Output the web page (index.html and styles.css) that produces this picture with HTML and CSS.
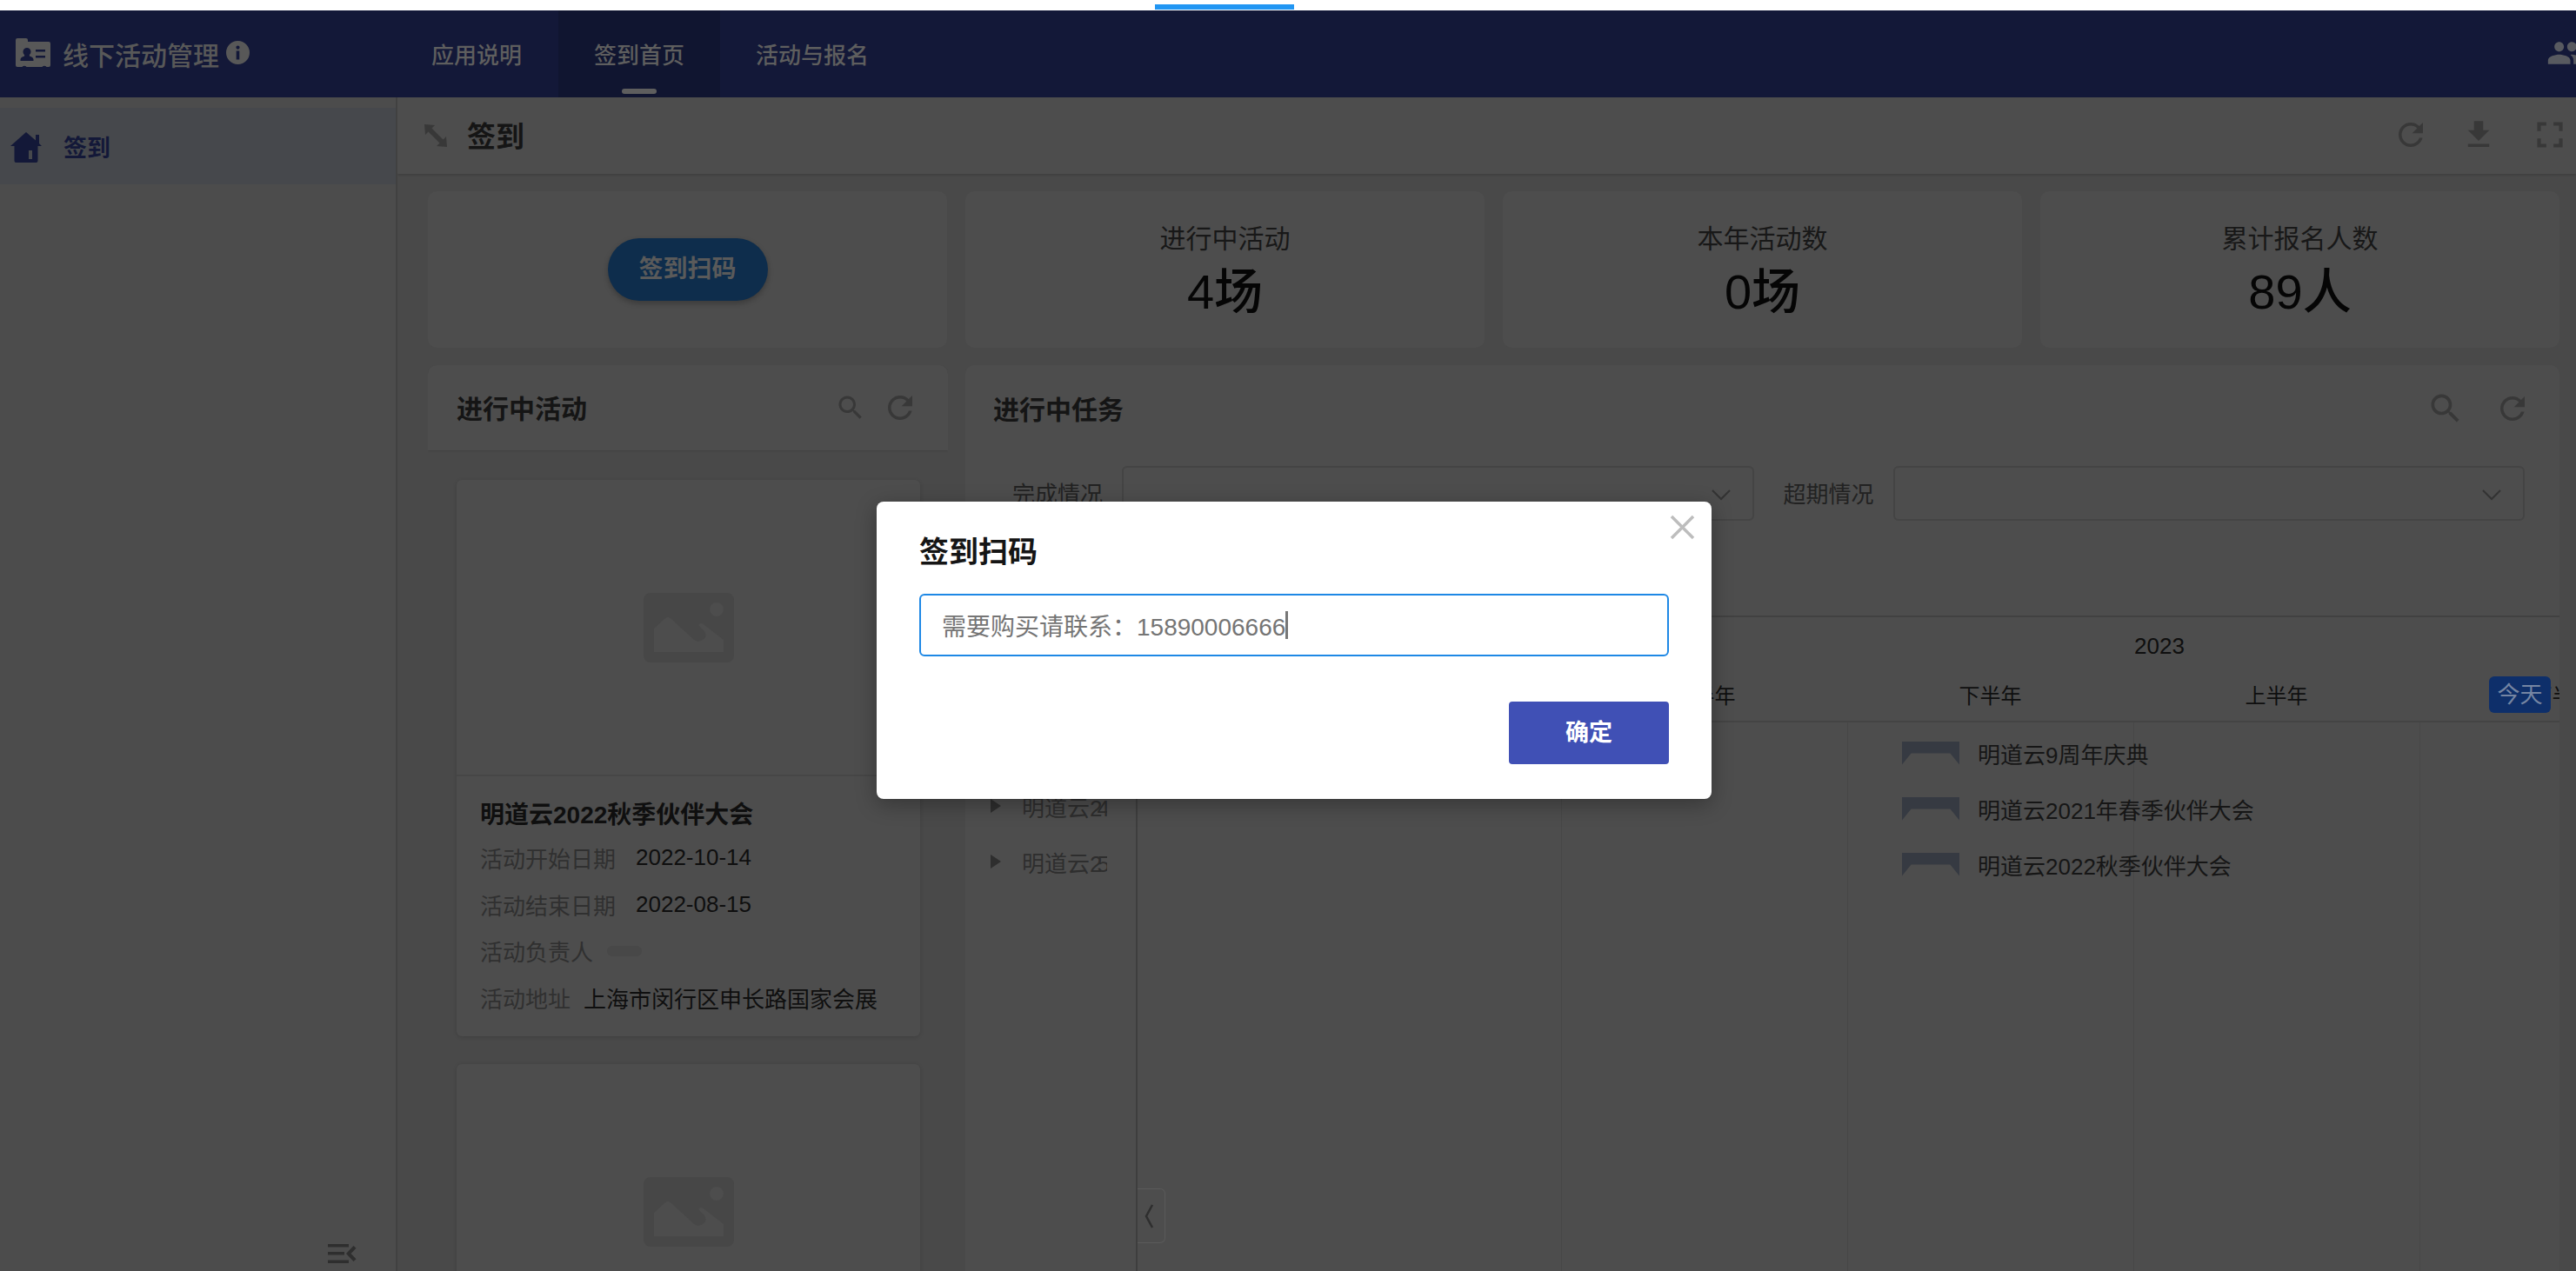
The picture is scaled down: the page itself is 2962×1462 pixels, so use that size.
FILE: index.html
```html
<!DOCTYPE html>
<html lang="zh-CN">
<head>
    <meta charset="UTF-8">
    <meta name="viewport" content="width=device-width, initial-scale=1.0">
    <title>线下活动管理</title>
    <link rel="stylesheet" href="styles.css">
</head>
<body>

    <!-- Loading strip -->
    <div class="top-strip">
        <div class="top-progress"></div>
    </div>

    <!-- Header -->
    <div class="app-header">
        <div class="app-brand">
            <svg class="brand-icon" viewBox="0 0 40 33">
                <path fill-rule="evenodd" d="M2 0h10a2 2 0 0 1 2 2v2h24a2 2 0 0 1 2 2v25a2 2 0 0 1-2 2h-2.500a3 3 0 0 0-5 0H12.500a3 3 0 0 0-5 0H2a2 2 0 0 1-2-2V2a2 2 0 0 1 2-2zM13 11a4.500 4.500 0 0 0-4.500 4.500c0 1.500.6 2.800 1.600 3.600v1.400c-2.600.8-4.600 2.200-4.600 4v1.500h15v-1.500c0-1.800-2-3.200-4.600-4v-1.400a4.700 4.700 0 0 0 1.600-3.600A4.500 4.500 0 0 0 13 11zM23 13v2.500h11V13zM23 20v2.500h11V20z"/>
            </svg>
            <span class="brand-name">线下活动管理</span>
            <svg class="brand-info" viewBox="0 0 27 27">
                <path fill-rule="evenodd" d="M13.500 0a13.500 13.500 0 1 1 0 27a13.500 13.500 0 0 1 0-27zM11.700 11.500v10h3.600v-10zM13.500 5.500a2.100 2.100 0 1 0 0 4.200a2.100 2.100 0 0 0 0-4.200z"/>
            </svg>
        </div>
        <div class="app-tabs">
            <div class="app-tab">应用说明</div>
            <div class="app-tab active">签到首页</div>
            <div class="app-tab">活动与报名</div>
        </div>
        <svg class="header-user" viewBox="0 0 24 24">
            <path d="M16 11c1.660 0 2.990-1.340 2.990-3S17.660 5 16 5c-1.660 0-3 1.340-3 3s1.340 3 3 3zm-8 0c1.660 0 2.990-1.340 2.990-3S9.660 5 8 5C6.340 5 5 6.340 5 8s1.340 3 3 3zm0 2c-2.330 0-7 1.170-7 3.500V19h14v-2.500c0-2.330-4.670-3.500-7-3.500zm8 0c-.290 0-.620.020-.970.050 1.160.840 1.970 1.970 1.970 3.450V19h6v-2.500c0-2.330-4.670-3.500-7-3.500z"/>
        </svg>
    </div>

    <div class="app-body">

        <!-- Sidebar -->
        <div class="sidebar">
            <div class="side-item">
                <svg class="side-icon" viewBox="0 0 36 35">
                    <path fill-rule="evenodd" d="M18 0l11 9.500V3h4v10l3 3h-4.500v17a2 2 0 0 1-2 2H6.500a2 2 0 0 1-2-2V16H0zM21 21v10h4V21z"/>
                </svg>
                <span>签到</span>
            </div>
            <svg class="side-collapse" viewBox="0 0 33 22">
                <path d="M0 0h24v3.500H0zM0 9h19v3.500H0zM0 18.500h24V22H0zM29.500 2l3 2.700-6 6.300 6 6.300-3 2.700-8.500-9z"/>
            </svg>
        </div>

        <div class="main">

            <!-- Page toolbar -->
            <div class="toolbar">
                <svg class="toolbar-expand" viewBox="0 0 26 26">
                    <path d="M0 0L12 1 8.500 4.500 21.500 17.500 25 14 26 26 14 25 17.500 21.500 4.500 8.500 1 12z"/>
                </svg>
                <div class="toolbar-title">签到</div>
                <div class="toolbar-icons">
                    <svg class="icon-42" viewBox="0 0 24 24"><path d="M17.650 6.350C16.200 4.900 14.210 4 12 4c-4.420 0-7.990 3.580-7.990 8s3.570 8 7.990 8c3.730 0 6.840-2.550 7.730-6h-2.080c-.820 2.330-3.040 4-5.650 4-3.310 0-6-2.690-6-6s2.690-6 6-6c1.660 0 3.140.690 4.220 1.780L13 11h7V4l-2.350 2.350z"/></svg>
                    <svg class="icon-42" viewBox="0 0 24 24"><path d="M19 9h-4V3H9v6H5l7 7 7-7zM5 18v2h14v-2H5z"/></svg>
                    <svg class="icon-50" viewBox="0 0 24 24"><path d="M7 14H5v5h5v-2H7v-3zm-2-4h2V7h3V5H5v5zm12 7h-3v2h5v-5h-2v3zM14 5v2h3v3h2V5h-5z"/></svg>
                </div>
            </div>

            <div class="content">

                <!-- Summary cards -->
                <div class="summary-row">
                    <div class="summary-card">
                        <div class="scan-button">签到扫码</div>
                    </div>
                    <div class="summary-card">
                        <div class="summary-label">进行中活动</div>
                        <div class="summary-value">4场</div>
                    </div>
                    <div class="summary-card">
                        <div class="summary-label">本年活动数</div>
                        <div class="summary-value">0场</div>
                    </div>
                    <div class="summary-card">
                        <div class="summary-label">累计报名人数</div>
                        <div class="summary-value">89人</div>
                    </div>
                </div>

                <div class="lower-row">

                    <!-- Activity list -->
                    <div class="activity-col">
                        <div class="panel-head small">
                            <div class="panel-title">进行中活动</div>
                            <svg class="icon-36" viewBox="0 0 24 24"><path d="M15.500 14h-.790l-.280-.270C15.410 12.590 16 11.110 16 9.500 16 5.910 13.090 3 9.500 3S3 5.910 3 9.500 5.910 16 9.500 16c1.610 0 3.090-.590 4.230-1.570l.270.280v.790l5 4.990L20.490 19l-4.990-5zm-6 0C7.010 14 5 11.990 5 9.500S7.010 5 9.500 5 14 7.010 14 9.500 11.990 14 9.500 14z"/></svg>
                            <svg class="icon-42" viewBox="0 0 24 24"><path d="M17.650 6.350C16.200 4.900 14.210 4 12 4c-4.420 0-7.990 3.580-7.990 8s3.570 8 7.990 8c3.730 0 6.840-2.550 7.730-6h-2.080c-.820 2.330-3.040 4-5.650 4-3.310 0-6-2.690-6-6s2.690-6 6-6c1.660 0 3.140.690 4.220 1.780L13 11h7V4l-2.350 2.350z"/></svg>
                        </div>

                        <div class="activity-card">
                            <div class="activity-cover">
                                <svg class="cover-icon" viewBox="0 0 104 80">
                                    <path fill-rule="evenodd" d="M8 0h88a8 8 0 0 1 8 8v64a8 8 0 0 1-8 8H8a8 8 0 0 1-8-8V8a8 8 0 0 1 8-8zM84 11a8 8 0 1 0 0 16a8 8 0 0 0 0-16zM12 41L24 30Q28 26 32 30L57 53Q62 58 68 54 74 50 70 44L63 37Q66 33 70 37L92 54V68H12z"/>
                                </svg>
                            </div>
                            <div class="activity-info">
                                <div class="activity-name">明道云2022秋季伙伴大会</div>
                                <div class="info-row"><span class="info-label">活动开始日期</span><span>2022-10-14</span></div>
                                <div class="info-row"><span class="info-label">活动结束日期</span><span>2022-08-15</span></div>
                                <div class="info-row"><span class="info-label tight">活动负责人</span><span class="info-chip"></span></div>
                                <div class="info-row"><span class="info-label mid">活动地址</span><span>上海市闵行区申长路国家会展</span></div>
                            </div>
                        </div>

                        <div class="activity-card">
                            <div class="activity-cover">
                                <svg class="cover-icon" viewBox="0 0 104 80">
                                    <path fill-rule="evenodd" d="M8 0h88a8 8 0 0 1 8 8v64a8 8 0 0 1-8 8H8a8 8 0 0 1-8-8V8a8 8 0 0 1 8-8zM84 11a8 8 0 1 0 0 16a8 8 0 0 0 0-16zM12 41L24 30Q28 26 32 30L57 53Q62 58 68 54 74 50 70 44L63 37Q66 33 70 37L92 54V68H12z"/>
                                </svg>
                            </div>
                        </div>
                    </div>

                    <!-- Task panel -->
                    <div class="task-panel">
                        <div class="panel-head">
                            <div class="panel-title">进行中任务</div>
                            <svg class="icon-44" viewBox="0 0 24 24"><path d="M15.500 14h-.790l-.280-.270C15.410 12.590 16 11.110 16 9.500 16 5.910 13.090 3 9.500 3S3 5.910 3 9.500 5.910 16 9.500 16c1.610 0 3.090-.590 4.230-1.570l.270.280v.790l5 4.990L20.490 19l-4.990-5zm-6 0C7.010 14 5 11.990 5 9.500S7.010 5 9.500 5 14 7.010 14 9.500 11.990 14 9.500 14z"/></svg>
                            <svg class="icon-42" viewBox="0 0 24 24"><path d="M17.650 6.350C16.200 4.900 14.210 4 12 4c-4.420 0-7.990 3.580-7.990 8s3.570 8 7.990 8c3.730 0 6.840-2.550 7.730-6h-2.080c-.820 2.330-3.040 4-5.650 4-3.310 0-6-2.690-6-6s2.690-6 6-6c1.660 0 3.140.690 4.220 1.780L13 11h7V4l-2.350 2.350z"/></svg>
                        </div>

                        <div class="filter-row">
                            <div class="filter-label">完成情况</div>
                            <div class="filter-select">
                                <svg class="select-arrow" viewBox="0 0 24 14"><path d="M2 2l10 10L22 2"/></svg>
                            </div>
                            <div class="filter-label">超期情况</div>
                            <div class="filter-select">
                                <svg class="select-arrow" viewBox="0 0 24 14"><path d="M2 2l10 10L22 2"/></svg>
                            </div>
                        </div>

                        <!-- Gantt -->
                        <div class="gantt">
                            <div class="gantt-tree">
                                <div class="tree-row"><i class="tree-arrow"></i><span class="tree-name">明道云2<b>3</b></span></div>
                                <div class="tree-row"><i class="tree-arrow"></i><span class="tree-name">明道云2<b>4</b></span></div>
                                <div class="tree-row"><i class="tree-arrow"></i><span class="tree-name">明道云2<b>5</b></span></div>
                            </div>
                            <div class="gantt-chart">
                                <div class="gantt-head">
                                    <div class="gantt-year">2023</div>
                                    <div class="gantt-halves">
                                        <div class="gantt-half">下半年</div>
                                        <div class="gantt-half">上半年</div>
                                        <div class="gantt-half">下半年</div>
                                        <div class="gantt-half">上半年</div>
                                        <div class="gantt-half">下半年</div>
                                    </div>
                                    <div class="today-badge">今天</div>
                                </div>
                                <div class="gantt-body">
                                    <div class="gantt-item"><i class="gantt-bar"></i>明道云9周年庆典</div>
                                    <div class="gantt-item"><i class="gantt-bar"></i>明道云2021年春季伙伴大会</div>
                                    <div class="gantt-item"><i class="gantt-bar"></i>明道云2022秋季伙伴大会</div>
                                </div>
                                <div class="gantt-toggle">
                                    <svg viewBox="0 0 12 30"><path d="M10 2L3 15l7 13"/></svg>
                                </div>
                            </div>
                        </div>
                    </div>

                </div>
            </div>
        </div>
    </div>

    <!-- Dialog -->
    <div class="dialog">
        <svg class="dialog-close" viewBox="0 0 29 29"><path d="M2 2l25 25M27 2L2 27"/></svg>
        <div class="dialog-title">签到扫码</div>
        <div class="dialog-input">需要购买请联系：15890006666<i class="input-caret"></i></div>
        <div class="dialog-actions">
            <div class="dialog-button">确定</div>
        </div>
    </div>

</body>
</html>
```

FILE: styles.css
```css
/* Global styling */
* {
    box-sizing: border-box;
}

html, body {
    height: 100%;
}

body {
    margin: 0;
    overflow: hidden;
    display: flex;
    flex-direction: column;
    background: #494949;
    color: #0f0f0f;
    font-family: "Liberation Sans", "Noto Sans CJK SC", sans-serif;
    font-size: 26px;
}

/* Loading strip */
.top-strip {
    height: 12px;
    flex: none;
    padding: 5px 0 0 1328px;
    background: #fff;
}

.top-progress {
    width: 160px;
    height: 6px;
    background: #2196f3;
}

/* Header */
.app-header {
    height: 100px;
    flex: none;
    display: flex;
    background: #131838;
}

.app-brand {
    width: 470px;
    flex: none;
    display: flex;
    align-items: center;
    padding: 0 0 0 18px;
    margin-top: -1px;
}

.brand-icon {
    width: 40px;
    height: 33px;
    fill: #585858;
    margin: -2px 14px 0 0;
}

.brand-name {
    font-size: 30px;
    font-weight: 500;
    color: #585858;
}

.brand-info {
    width: 27px;
    height: 27px;
    fill: #585858;
    margin: -2px 0 0 8px;
}

.app-tabs {
    display: flex;
    flex: 1;
    margin-left: -9px;
}

.app-tab {
    position: relative;
    display: flex;
    align-items: center;
    justify-content: center;
    width: 186px;
    height: 100px;
    padding-bottom: 2px;
    font-weight: 500;
    font-size: 26px;
    color: #5e5e5e;
}

.app-tab:first-child {
    width: 181px;
    justify-content: flex-start;
    padding-left: 35px;
}

.app-tab:last-child {
    width: 200px;
    justify-content: flex-start;
    padding-left: 41px;
}

.app-tab.active {
    background: #101530;
}

/* Small bar under the active tab */
.app-tab.active::after {
    content: "";
    position: absolute;
    left: 73px;
    bottom: 4px;
    width: 40px;
    height: 6px;
    border-radius: 3px;
    background: #5e5e5e;
}

.header-user {
    width: 44px;
    height: 44px;
    flex: none;
    fill: #585a60;
    margin: 27px -10px 0 0;
}

/* Page body */
.app-body {
    flex: 1;
    display: flex;
    min-height: 0;
    overflow: hidden;
}

/* Sidebar */
.sidebar {
    position: relative;
    width: 457px;
    flex: none;
    padding-top: 12px;
    background: #4c4c4c;
    border-right: 2px solid #414141;
}

.side-item {
    display: flex;
    align-items: center;
    height: 88px;
    padding-left: 12px;
    background: #46484c;
    color: #131838;
    font-size: 27px;
    font-weight: 700;
}

.side-icon {
    width: 36px;
    height: 35px;
    fill: #131838;
    margin-right: 25px;
    margin-top: 2px;
}

.side-collapse {
    position: absolute;
    left: 377px;
    bottom: 9px;
    width: 33px;
    height: 22px;
    fill: #2e2e2e;
}

/* Main area */
.main {
    flex: 1;
    min-width: 0;
    display: flex;
    flex-direction: column;
}

.toolbar {
    height: 88px;
    flex: none;
    display: flex;
    align-items: center;
    padding-left: 31px;
    background: #4d4d4d;
    box-shadow: 0 1px 3px rgba(0, 0, 0, 0.2);
}

.toolbar-expand {
    width: 26px;
    height: 26px;
    fill: #383838;
    margin: -1px 23px 0 0;
}

.toolbar-title {
    font-size: 33px;
    font-weight: 700;
    color: #151515;
    margin-top: -3px;
}

.toolbar-icons {
    margin-left: auto;
    display: flex;
    align-items: center;
    gap: 36px;
    padding-right: 5px;
    margin-top: -2px;
}

.toolbar-icons svg, .panel-head svg {
    flex: none;
    fill: #383838;
}

.icon-36 {
    width: 36px;
    height: 36px;
}

.icon-42 {
    width: 42px;
    height: 42px;
}

.icon-44 {
    width: 44px;
    height: 44px;
}

.icon-50 {
    width: 50px;
    height: 50px;
}

.content {
    flex: 1;
    min-height: 0;
    padding: 20px 19px 0 35px;
    display: flex;
    flex-direction: column;
    gap: 20px;
}

/* Summary cards */
.summary-row {
    height: 180px;
    flex: none;
    display: grid;
    grid-template-columns: repeat(4, 597px);
    gap: 21px;
}

.summary-card {
    display: flex;
    flex-direction: column;
    align-items: center;
    justify-content: center;
    border-radius: 10px;
    background: #4d4d4d;
}

.scan-button {
    width: 184px;
    height: 72px;
    line-height: 72px;
    text-align: center;
    border-radius: 36px;
    background: #0e2d4c;
    box-shadow: 0 3px 6px rgba(0, 0, 0, 0.25);
    color: #5a5a5a;
    font-size: 28px;
    font-weight: 700;
}

.summary-label {
    font-size: 30px;
    line-height: 40px;
    color: #181818;
    margin-top: -3px;
}

.summary-value {
    font-size: 56px;
    line-height: 68px;
    font-weight: 500;
    color: #050505;
    margin: 7px 0 -7px;
}

/* Lower row */
.lower-row {
    flex: 1;
    min-height: 0;
    display: flex;
    gap: 20px;
}

.activity-col {
    width: 598px;
    flex: none;
    overflow: hidden;
}

.panel-head {
    height: 100px;
    flex: none;
    display: flex;
    align-items: center;
    gap: 34px;
    padding: 0 33px 0 32px;
}

.panel-head.small {
    height: 98px;
    gap: 18px;
    padding: 0 34px 0 33px;
    background: #4d4d4d;
    border-radius: 10px 10px 0 0;
    box-shadow: 0 1px 2px rgba(0, 0, 0, 0.1);
}

.panel-title {
    margin: 0 auto 3px 0;
    font-size: 30px;
    font-weight: 700;
    color: #151515;
}

/* Activity cards */
.activity-card {
    width: 533px;
    height: 640px;
    margin: 34px 0 -2px 33px;
    border-radius: 6px;
    background: #4d4d4d;
    box-shadow: 0 1px 4px rgba(0, 0, 0, 0.15);
}

.activity-cover {
    display: flex;
    align-items: center;
    justify-content: center;
    height: 341px;
    border-bottom: 2px solid #464646;
}

.cover-icon {
    width: 104px;
    height: 80px;
    fill: #474747;
}

.activity-info {
    padding: 27px 27px;
}

.activity-name {
    font-size: 28px;
    font-weight: 700;
    line-height: 36px;
    color: #0f0f0f;
    margin-bottom: 4px;
}

.info-row {
    display: flex;
    align-items: center;
    height: 53.500px;
    white-space: nowrap;
}

.info-label {
    width: 179px;
    flex: none;
    color: #303030;
}

.info-label.tight {
    width: 146px;
}

.info-label.mid {
    width: 119px;
}

.info-chip {
    width: 40px;
    height: 12px;
    border-radius: 6px;
    background: #484848;
}

/* Task panel */
.task-panel {
    flex: 1;
    min-width: 0;
    min-height: 0;
    display: flex;
    flex-direction: column;
    background: #4d4d4d;
    border-radius: 10px 10px 0 0;
}

.filter-row {
    display: flex;
    align-items: center;
    height: 63px;
    flex: none;
    margin: 16px 0 109px;
    padding: 0 40px 0 54px;
}

.filter-label {
    width: 126px;
    flex: none;
    margin-bottom: 2px;
    color: #222;
}

.filter-label:nth-child(3) {
    width: 126px;
    margin-left: 34px;
}

.filter-select {
    position: relative;
    flex: 1;
    height: 63px;
    border: 2px solid #444;
    border-radius: 6px;
}

.select-arrow {
    position: absolute;
    right: 24px;
    top: 24px;
    width: 24px;
    height: 14px;
    fill: none;
    stroke: #333;
    stroke-width: 2;
}

/* Gantt */
.gantt {
    flex: 1;
    min-height: 0;
    display: flex;
    border-top: 2px solid #414141;
}

.gantt-tree {
    width: 198px;
    flex: none;
    padding: 121px 0 0 29px;
    border-right: 2px solid #3e3e3e;
}

.tree-row {
    display: flex;
    align-items: center;
    height: 64px;
    color: #2e2e2e;
}

.tree-arrow {
    width: 0;
    height: 0;
    margin-right: 24px;
    border-style: solid;
    border-width: 8px 0 8px 12px;
    border-color: transparent transparent transparent #2e2e2e;
}

.tree-name {
    width: 98px;
    overflow: hidden;
    white-space: nowrap;
}

.tree-name b {
    font-weight: 400;
    margin-left: -6px;
}

.gantt-chart {
    position: relative;
    flex: 1;
    min-width: 0;
    min-height: 0;
    display: flex;
    flex-direction: column;
    overflow: hidden;
}

.gantt-head {
    position: relative;
    height: 121px;
    flex: none;
    border-bottom: 2px solid #444;
}

.gantt-year {
    height: 71px;
    padding: 18px 0 0 1146px;
    line-height: 30px;
}

.gantt-halves {
    display: flex;
    margin-left: 158px;
}

.gantt-half {
    width: 329px;
    flex: none;
    text-align: center;
    font-size: 24px;
    line-height: 40px;
}

/* Today badge sits over the half year row */
.today-badge {
    position: absolute;
    left: 1554px;
    top: 68px;
    width: 71px;
    height: 42px;
    line-height: 42px;
    text-align: center;
    border-radius: 6px;
    background: #0e2f6a;
    color: #7585a2;
}

.gantt-body {
    flex: 1;
    min-height: 0;
    padding: 3px 0 0 879px;
    background: repeating-linear-gradient(to right, transparent 0, transparent 328px, #474747 328px, #474747 329px) 159px 0;
}

.gantt-item {
    display: flex;
    align-items: center;
    height: 64px;
    white-space: nowrap;
    color: #161616;
}

/* Milestone bar with two legs */
.gantt-bar {
    width: 66px;
    height: 27px;
    margin-right: 21px;
    background: #363a42;
    clip-path: polygon(0 0, 100% 0, 100% 100%, 84% 52%, 16% 52%, 0 100%);
}

.gantt-toggle {
    position: absolute;
    left: 0;
    top: 657px;
    display: flex;
    align-items: center;
    justify-content: center;
    width: 32px;
    height: 63px;
    border: 1px solid #5a5a5a;
    border-left: none;
    border-radius: 0 6px 6px 0;
    background: #4d4d4d;
}

.gantt-toggle svg {
    width: 12px;
    height: 30px;
    margin-right: 6px;
    fill: none;
    stroke: #2e2e2e;
    stroke-width: 2.500;
}

/* Dialog */
.dialog {
    position: absolute;
    left: 1008px;
    top: 577px;
    width: 960px;
    height: 342px;
    padding: 37px 49px;
    border-radius: 8px;
    background: #fff;
    box-shadow: 0 6px 24px rgba(0, 0, 0, 0.3);
}

.dialog-close {
    position: absolute;
    right: 19px;
    top: 15px;
    width: 29px;
    height: 29px;
    fill: none;
    stroke: #bdbdbd;
    stroke-width: 3.500;
}

.dialog-title {
    font-size: 34px;
    line-height: 42px;
    font-weight: 700;
    color: #151515;
}

.dialog-input {
    display: flex;
    align-items: center;
    height: 72px;
    margin-top: 27px;
    padding-left: 24px;
    border: 2px solid #1e88e5;
    border-radius: 6px;
    font-size: 28px;
    color: #757575;
}

.input-caret {
    width: 3px;
    height: 32px;
    background: #777;
}

.dialog-actions {
    display: flex;
    justify-content: flex-end;
    margin-top: 52px;
}

.dialog-button {
    width: 184px;
    height: 72px;
    line-height: 72px;
    text-align: center;
    border-radius: 4px;
    background: #4050b5;
    color: #fff;
    font-size: 27px;
    font-weight: 700;
}
```
